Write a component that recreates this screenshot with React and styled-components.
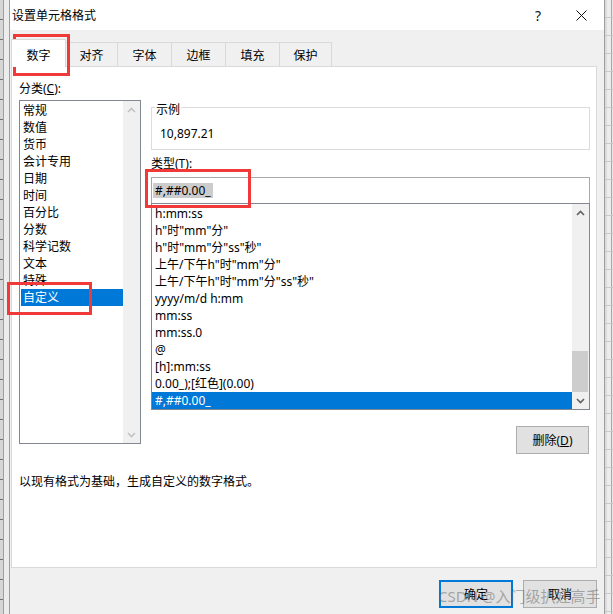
import styled, { createGlobalStyle } from "styled-components";

const GlobalStyle = createGlobalStyle`
  html, body { margin: 0; padding: 0; }
  body {
    width: 613px;
    height: 614px;
    overflow: hidden;
    font-family: "Noto Sans", "Noto Sans CJK SC", sans-serif;
    font-size: 12px;
    color: #000;
  }
`;

const Desk = styled.div`
  position: relative;
  width: 613px;
  height: 614px;
  display: flex;
  overflow: hidden;
  background: #e9e9e9;
`;

const SheetLeft = styled.div`
  width: 9px;
  flex-shrink: 0;
  background:
    repeating-linear-gradient(to bottom, transparent 0 19px, #6f6f6f 19px 20px) 0 0 / 3px 100% no-repeat,
    linear-gradient(to right, #d6d6d6 0 3px, #a0a0a0 3px 4px, #ececec 4px);
`;

const SheetRight = styled.div`
  width: 8px;
  flex-shrink: 0;
  background:
    repeating-linear-gradient(to bottom, transparent 0 17px, #c9c9c9 17px 18px),
    linear-gradient(to right, #dcdcdc 0 2px, #ececec 2px 6px, #a9a9a9 6px 7px, #e6e6e6 7px);
`;

const Dialog = styled.div`
  width: 596px;
  flex-shrink: 0;
  box-sizing: border-box;
  border-left: 1px solid #9d9d9d;
  border-right: 1px solid #9d9d9d;
  background: #f0f0f0;
  display: flex;
  flex-direction: column;
`;

const TitleBar = styled.div`
  height: 30px;
  background: #fff;
  display: flex;
  align-items: center;
  padding-left: 2px;
`;

const Title = styled.div`
  flex: 1;
  font-size: 12px;
`;

const TitleButton = styled.div`
  width: ${(p) => p.w}px;
  height: 30px;
  display: flex;
  align-items: center;
  justify-content: center;
  font-size: 14px;
  color: #111;
`;

const Body = styled.div`
  padding-top: 9px;
  display: flex;
  flex-direction: column;
`;

const TabRow = styled.div`
  display: flex;
  align-items: flex-end;
  height: 28px;
  margin-left: 1px;
  margin-bottom: -1px;
`;

const Tab = styled.div`
  position: relative;
  width: ${(p) => p.w}px;
  height: ${(p) => (p.active ? 28 : 25)}px;
  box-sizing: border-box;
  margin-left: ${(p) => (p.first ? 0 : -1)}px;
  border: 1px solid #d9d9d9;
  border-bottom: ${(p) => (p.active ? "none" : "1px solid #d9d9d9")};
  background: ${(p) => (p.active ? "#fff" : "#f0f0f0")};
  z-index: ${(p) => (p.active ? 2 : 0)};
  display: flex;
  align-items: center;
  justify-content: center;
  padding-top: ${(p) => (p.active ? 2 : 0)}px;
  font-size: 12px;
`;

const Panel = styled.div`
  height: 502px;
  box-sizing: border-box;
  margin: 0 7px 0 1px;
  border: 1px solid #d9d9d9;
  background: #fff;
  padding: 13px 6px 0 7px;
  display: flex;
  flex-direction: column;
`;

const Label = styled.div`
  line-height: 17px;
  height: 17px;
  margin-top: ${(p) => p.mt || 0}px;
`;

const MainRow = styled.div`
  display: flex;
  gap: 10px;
  margin-top: 3px;
  align-items: flex-start;
`;

const ListBox = styled.div`
  width: ${(p) => p.w}px;
  height: ${(p) => p.h}px;
  box-sizing: border-box;
  border: 1px solid #828790;
  background: #fff;
  display: flex;
`;

const Items = styled.div`
  flex: 1;
  padding: 1px 0 0 ${(p) => p.pl}px;
  overflow: hidden;
`;

const Item = styled.div`
  height: 17px;
  line-height: 17px;
  padding-left: ${(p) => p.pad}px;
  white-space: nowrap;
  background: ${(p) => (p.selected ? "#0078d7" : "transparent")};
  color: ${(p) => (p.selected ? "#fff" : "#000")};
`;

const ScrollBar = styled.div`
  width: 17px;
  background: #f0f0f0;
  display: flex;
  flex-direction: column;
`;

const Arrow = styled.div`
  height: 17px;
  display: flex;
  align-items: center;
  justify-content: center;
  flex-shrink: 0;
`;

const Track = styled.div`
  flex: 1;
  display: flex;
  flex-direction: column;
  justify-content: flex-end;
`;

const Thumb = styled.div`
  height: ${(p) => p.h}px;
  margin-right: 1px;
  background: #cdcdcd;
`;

const RightCol = styled.div`
  width: 439px;
  display: flex;
  flex-direction: column;
`;

const GroupBox = styled.div`
  position: relative;
  margin-top: 7px;
  height: 43px;
  box-sizing: border-box;
  border: 1px solid #dcdcdc;
  padding: 17px 8px 0;
  line-height: 17px;
`;

const Legend = styled.span`
  position: absolute;
  top: -7px;
  left: 3px;
  padding: 0 1px;
  background: #fff;
  line-height: 17px;
`;

const TypeInput = styled.div`
  margin-top: 5px;
  height: 26px;
  box-sizing: border-box;
  border: 1px solid #a8a8a8;
  border-bottom: none;
  padding: 4px 0 0 1px;
`;

const Selected = styled.span`
  display: inline-block;
  height: 15px;
  line-height: 15px;
  padding: 0 2px;
  background: #cccccc;
`;

const Button = styled.div`
  width: ${(p) => p.w || 74}px;
  height: 28px;
  box-sizing: border-box;
  border: ${(p) => (p.primary ? "2px solid #0078d7" : "1px solid #adadad")};
  background: #e1e1e1;
  display: flex;
  align-items: center;
  justify-content: center;
  font-size: 12px;
`;

const DeleteButton = styled(Button)`
  align-self: flex-end;
  margin-top: 16px;
  margin-right: 1px;
`;

const Description = styled.div`
  margin-top: 19px;
  line-height: 17px;
`;

const Footer = styled.div`
  display: flex;
  justify-content: flex-end;
  gap: 10px;
  margin-top: 12px;
  padding-right: 7px;
`;

const Mark = styled.div`
  position: absolute;
  left: ${(p) => p.x}px;
  top: ${(p) => p.y}px;
  width: ${(p) => p.w}px;
  height: ${(p) => p.h}px;
  box-sizing: border-box;
  border: 3px solid #f03a3a;
  pointer-events: none;
`;

const Watermark = styled.div`
  position: absolute;
  left: 438px;
  top: 585px;
  font-family: "Noto Sans", "Noto Sans CJK SC", sans-serif;
  font-size: 15px;
  line-height: 22px;
  color: rgba(110, 110, 110, 0.55);
  white-space: nowrap;
  pointer-events: none;
`;

const Chevron = ({ up, color }) => (
  <svg width="9" height="6" viewBox="0 0 9 6">
    <polyline
      points={up ? "1,5 4.5,1.5 8,5" : "1,1 4.5,4.5 8,1"}
      fill="none"
      stroke={color}
      strokeWidth="1.6"
    />
  </svg>
);

const categories = [
  "常规", "数值", "货币", "会计专用", "日期", "时间",
  "百分比", "分数", "科学记数", "文本", "特殊", "自定义",
];

const formats = [
  "h:mm:ss",
  'h"时"mm"分"',
  'h"时"mm"分"ss"秒"',
  '上午/下午h"时"mm"分"',
  '上午/下午h"时"mm"分"ss"秒"',
  "yyyy/m/d h:mm",
  "mm:ss",
  "mm:ss.0",
  "@",
  "[h]:mm:ss",
  "0.00_);[红色](0.00)",
  "#,##0.00_",
];

const tabs = [
  ["数字", 55], ["对齐", 53], ["字体", 55], ["边框", 55], ["填充", 55], ["保护", 53],
];

export default function App() {
  return (
    <>
      <GlobalStyle />
      <Desk>
        <SheetLeft />
        <Dialog>
          <TitleBar>
            <Title>设置单元格格式</Title>
            <TitleButton w={40}>?</TitleButton>
            <TitleButton w={46}>
              <svg width="11" height="11" viewBox="0 0 11 11">
                <path d="M0.5 0.5 L10.5 10.5 M10.5 0.5 L0.5 10.5" stroke="#111" strokeWidth="1" />
              </svg>
            </TitleButton>
          </TitleBar>
          <Body>
            <TabRow>
              {tabs.map(([t, w], i) => (
                <Tab key={t} w={w} first={i === 0} active={i === 0}>{t}</Tab>
              ))}
            </TabRow>
            <Panel>
              <Label>分类(<u>C</u>):</Label>
              <MainRow>
                <ListBox w={122} h={344}>
                  <Items pl={1}>
                    {categories.map((c) => (
                      <Item key={c} pad={2} selected={c === "自定义"}>{c}</Item>
                    ))}
                  </Items>
                  <ScrollBar>
                    <Arrow><Chevron up color="#c2c2c2" /></Arrow>
                    <Track />
                    <Arrow><Chevron color="#c2c2c2" /></Arrow>
                  </ScrollBar>
                </ListBox>
                <RightCol>
                  <GroupBox>
                    <Legend>示例</Legend>
                    10,897.21
                  </GroupBox>
                  <Label mt={5}>类型(<u>T</u>):</Label>
                  <TypeInput>
                    <Selected>#,##0.00_</Selected>
                  </TypeInput>
                  <ListBox w={439} h={207}>
                    <Items pl={0}>
                      {formats.map((f, i) => (
                        <Item key={f} pad={3} selected={i === formats.length - 1}>{f}</Item>
                      ))}
                    </Items>
                    <ScrollBar>
                      <Arrow><Chevron up color="#606060" /></Arrow>
                      <Track><Thumb h={41} /></Track>
                      <Arrow><Chevron color="#606060" /></Arrow>
                    </ScrollBar>
                  </ListBox>
                  <DeleteButton w={73}>删除(<u>D</u>)</DeleteButton>
                </RightCol>
              </MainRow>
              <Description>以现有格式为基础，生成自定义的数字格式。</Description>
            </Panel>
            <Footer>
              <Button primary>确定</Button>
              <Button>取消</Button>
            </Footer>
          </Body>
        </Dialog>
        <SheetRight />
        <Mark x={13} y={34} w={57} h={42} />
        <Mark x={145} y={169} w={106} h={39} />
        <Mark x={7} y={282} w={85} h={33} />
        <Watermark>CSDN @入门级扒娃高手</Watermark>
      </Desk>
    </>
  );
}
